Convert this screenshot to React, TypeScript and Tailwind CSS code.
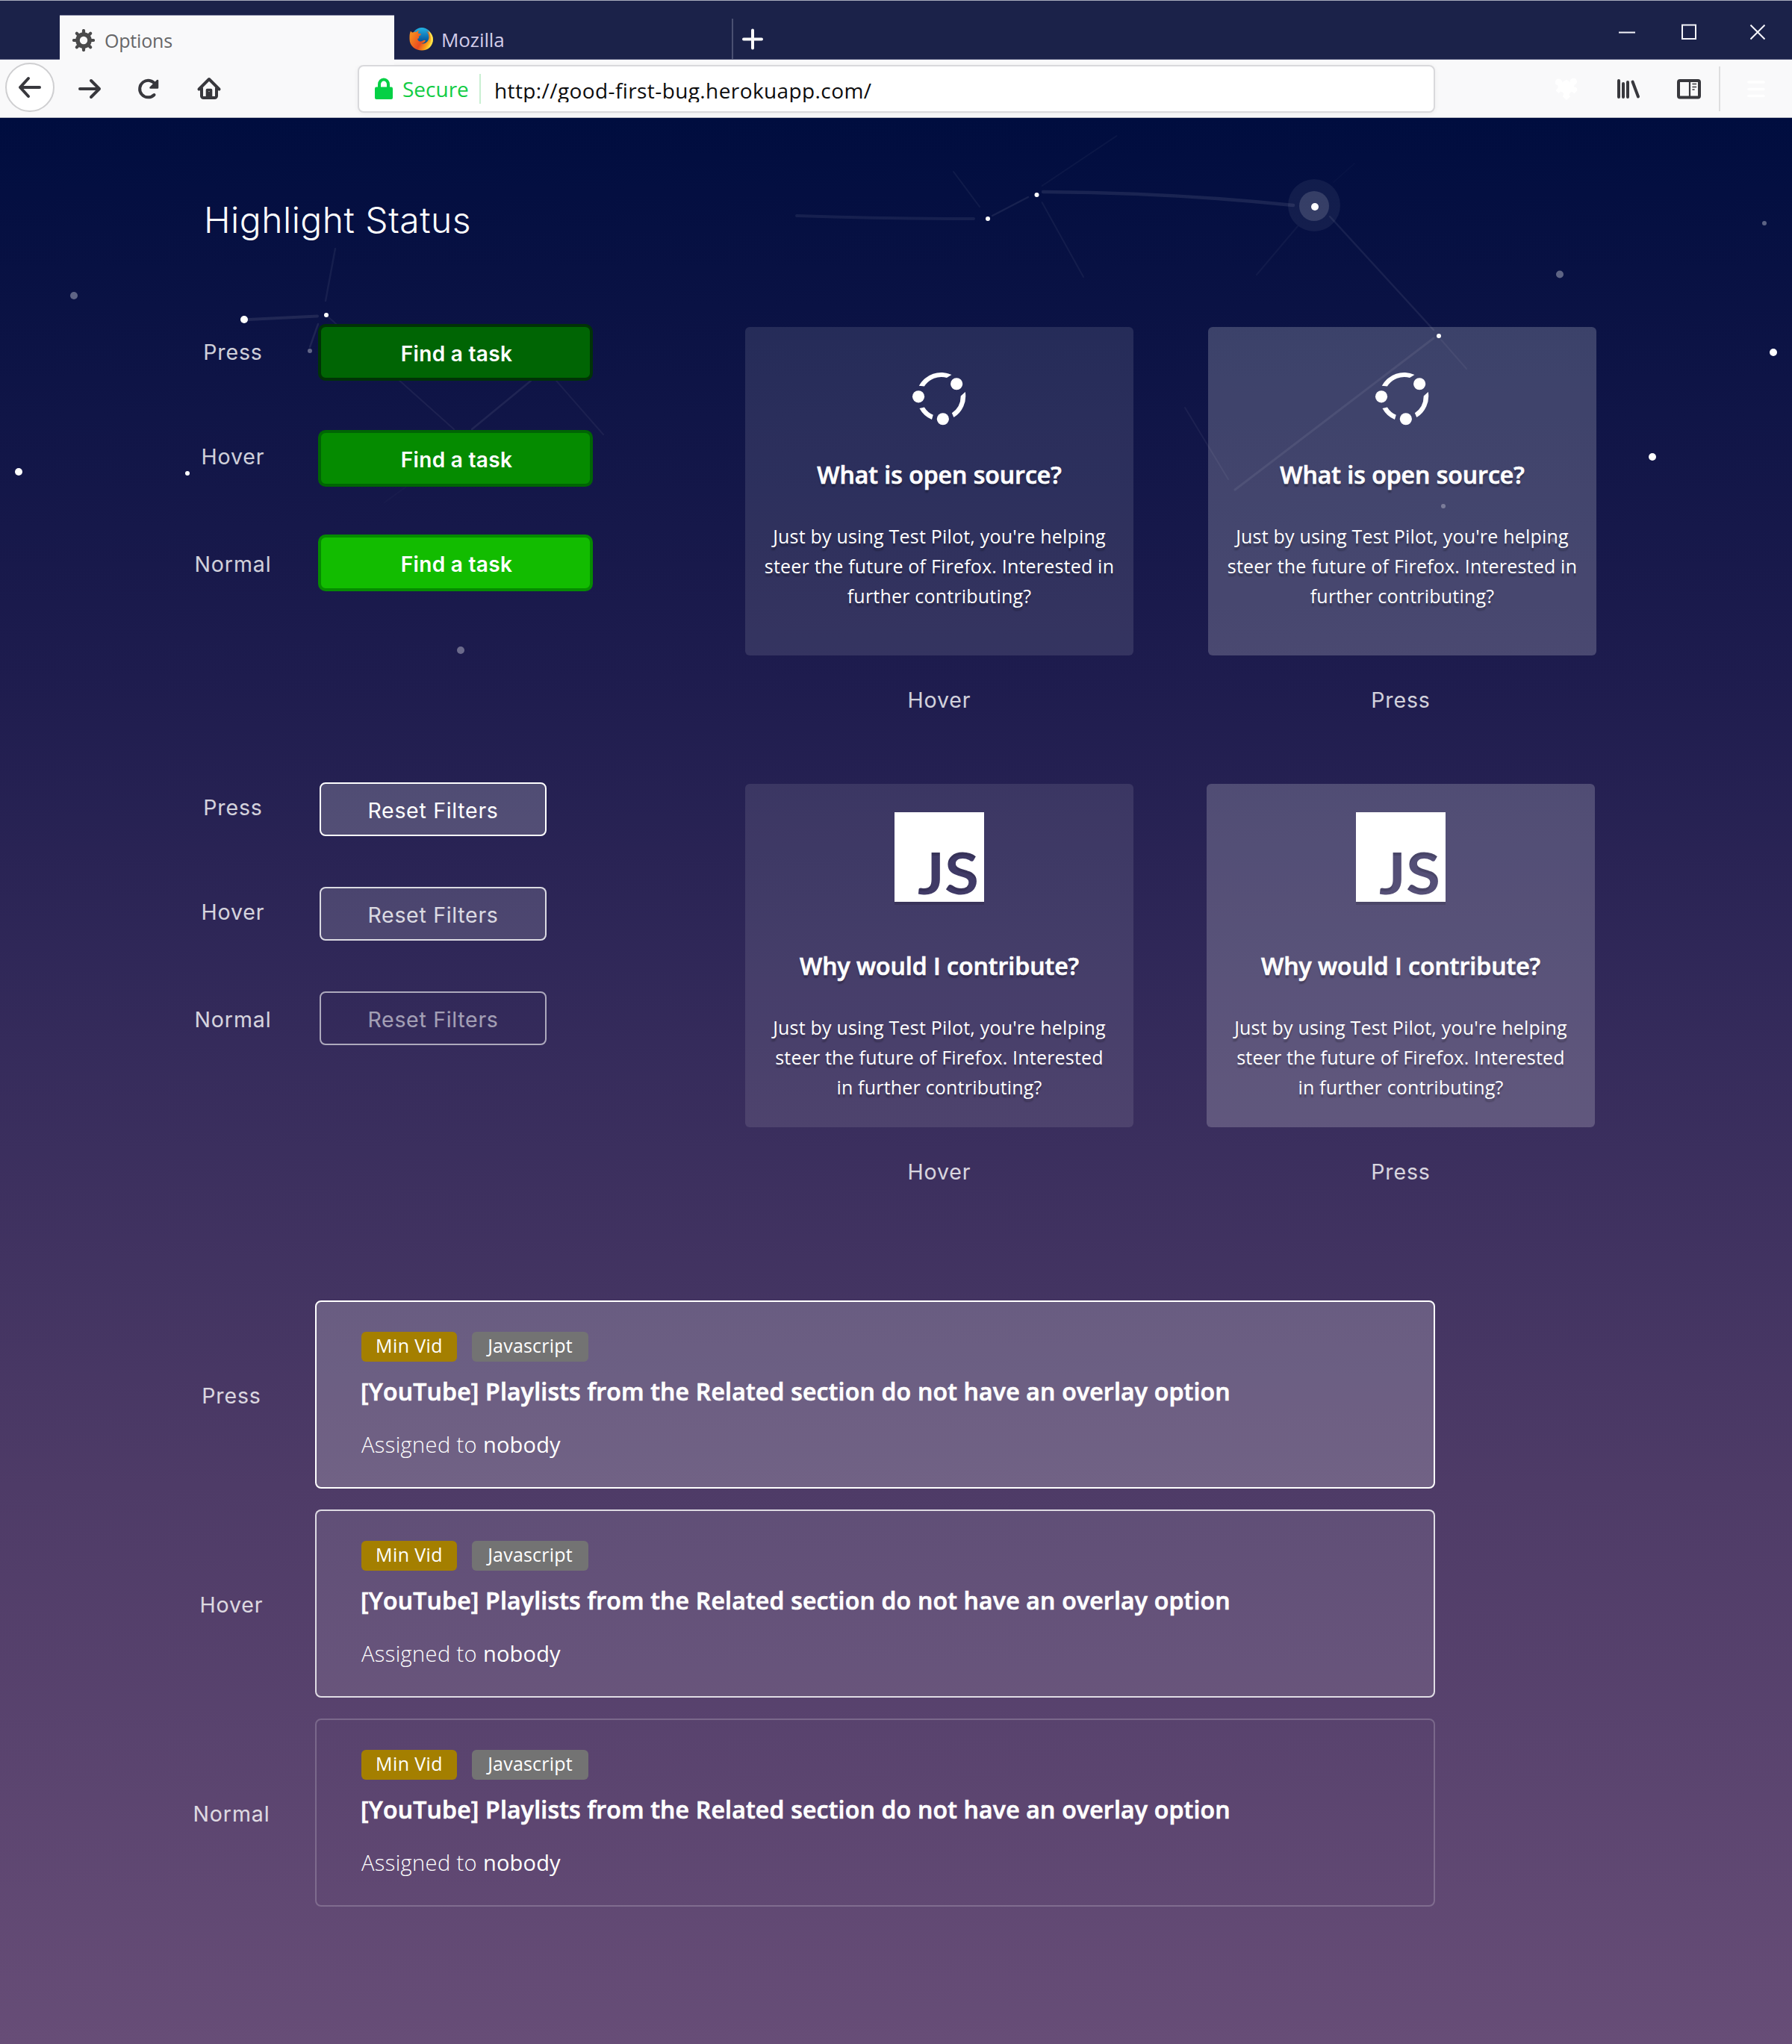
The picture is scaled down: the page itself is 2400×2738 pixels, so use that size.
import type { ReactNode } from "react";

const STARS: { x: number; y: number; r: number; o: number }[] = [
  { x: 1388.5, y: 261, r: 3, o: 1 },
  { x: 1323, y: 293, r: 3, o: 1 },
  { x: 1761, y: 277, r: 5, o: 1 },
  { x: 1927, y: 450, r: 3, o: 1 },
  { x: 2375, y: 472, r: 5, o: 1 },
  { x: 2213, y: 612, r: 5, o: 1 },
  { x: 2089, y: 367.5, r: 5, o: 0.35 },
  { x: 2363, y: 299, r: 3, o: 0.35 },
  { x: 1933, y: 678, r: 3, o: 0.3 },
  { x: 2081, y: 723, r: 3.5, o: 0.2 },
  { x: 99, y: 396, r: 5, o: 0.35 },
  { x: 327, y: 428, r: 5, o: 1 },
  { x: 437, y: 422, r: 3, o: 1 },
  { x: 415, y: 470, r: 3, o: 0.35 },
  { x: 25, y: 632, r: 5, o: 1 },
  { x: 251, y: 634, r: 3, o: 1 },
  { x: 617, y: 871, r: 5, o: 0.35 },
];

const TRAILS: { d: string; w: number; o: number }[] = [
  { d: "M1067 289Q1180 293 1304 293", w: 4, o: 0.07 },
  { d: "M1329 289L1377 264", w: 2.5, o: 0.08 },
  { d: "M1397 257Q1571 258 1732 275", w: 4.5, o: 0.09 },
  { d: "M1277 230L1312 277", w: 2, o: 0.05 },
  { d: "M1395.5 249L1495.5 182", w: 2, o: 0.04 },
  { d: "M1395.5 271L1451 371", w: 2, o: 0.05 },
  { d: "M1738 303L1683 368", w: 2, o: 0.04 },
  { d: "M1814 219L1786 244", w: 2, o: 0.02 },
  { d: "M1781 290L1920 442", w: 2.5, o: 0.07 },
  { d: "M1920 453L1654 656", w: 3, o: 0.07 },
  { d: "M1930 455L1964 494", w: 2, o: 0.05 },
  { d: "M1587 546L1645 642", w: 2, o: 0.05 },
  { d: "M449 333L436 403", w: 2.5, o: 0.06 },
  { d: "M333 428L425 423.5", w: 4, o: 0.09 },
  { d: "M426 434L415 465", w: 2.5, o: 0.08 },
  { d: "M439 424L608 575", w: 2, o: 0.06 },
  { d: "M711 510L632 575", w: 2.5, o: 0.07 },
  { d: "M544 652L515 673", w: 2, o: 0.02 },
  { d: "M745 510L808 582", w: 2, o: 0.05 },
];

function Sky() {
  return (
    <svg className="pointer-events-none absolute inset-0" width="2400" height="2580" viewBox="0 158 2400 2580" fill="none">
      {TRAILS.map((t) => (
        <path key={t.d} d={t.d} stroke="#fff" strokeWidth={t.w} strokeOpacity={t.o} strokeLinecap="round" />
      ))}
      <circle cx="1760" cy="275" r="35" fill="#fff" fillOpacity="0.06" />
      <circle cx="1760" cy="276" r="20" fill="#fff" fillOpacity="0.15" />
      {STARS.map((s) => (
        <circle key={`${s.x}-${s.y}`} cx={s.x} cy={s.y} r={s.r} fill="#fff" fillOpacity={s.o} />
      ))}
    </svg>
  );
}

function GearIcon() {
  return (
    <svg width="30" height="30" viewBox="-15 -15 30 30" fill="none" stroke="#4a4a4b">
      <circle r="8" strokeWidth="5.6" />
      {[0, 45, 90, 135, 180, 225, 270, 315].map((a) => (
        <path key={a} d="M0 -9V-13" strokeWidth="4.2" strokeLinecap="round" transform={`rotate(${a})`} />
      ))}
    </svg>
  );
}

function FirefoxIcon() {
  return (
    <svg width="34" height="32" viewBox="0 0 34 32">
      <defs>
        <linearGradient id="globe" x1="0" y1="0" x2="0" y2="1">
          <stop offset="0" stopColor="#23b4e4" />
          <stop offset="0.6" stopColor="#0a62a6" />
          <stop offset="1" stopColor="#123a78" />
        </linearGradient>
        <linearGradient id="fox" x1="0.1" y1="0.2" x2="0.95" y2="0.6">
          <stop offset="0" stopColor="#f58a1f" />
          <stop offset="0.55" stopColor="#ea4a20" />
          <stop offset="0.85" stopColor="#f9a11b" />
          <stop offset="1" stopColor="#fdd93a" />
        </linearGradient>
      </defs>
      <circle cx="18" cy="14" r="13" fill="url(#globe)" />
      <path
        d="M3 5.5c.6 1 1.5 1.700 2.800 2 1.500-.7 3-.8 4.700-.4 1-1.400 2.400-2.300 4-2.600-1 1.200-1.600 2.400-1.700 3.700 1 .9 2.600.9 4.200 1-.2 1.600-1.500 2.600-3 3.300-.3 1-.2 1.900.3 2.700-2-.4-2.600 1.200-1.500 2.700 2 2 4.700 1.800 6.600.5 1.400-.9 2.900-.7 3.500.3-1.300 2.300-3.600 3.300-6 3.300 6 1.800 10.800-3 10.600-8.500-.1-3.400-1.500-5.800-3.500-7.800 5.500 2.300 9 6 9 11.300 0 8.500-6.600 14.500-15 14.500S1.500 25.500 1.500 16.500C1.500 12.500 1.300 9 3 5.500z"
        fill="url(#fox)"
      />
      <path d="M26 4.500c5.200 3.500 7.500 8.500 6.600 14-.6 3.600-2.600 6.700-5.600 8.800 2.600-4 3.600-7.800 3-12.300-.5-4-1.800-7.500-4-10.500z" fill="#fde04a" />
    </svg>
  );
}

function ToolIcon({ children, className = "" }: { children: ReactNode; className?: string }) {
  return (
    <svg
      className={`shrink-0 ${className}`}
      width="40"
      height="40"
      viewBox="0 0 40 40"
      fill="none"
      stroke="#38383d"
      strokeWidth="4"
      strokeLinecap="round"
      strokeLinejoin="round"
    >
      {children}
    </svg>
  );
}

function BrowserChrome() {
  return (
    <header className="relative z-10 h-[158px] font-['Open_Sans',sans-serif]">
      <div className="flex h-20 items-start border-t border-t-[#a9adbd] border-b border-b-[#575b7d] bg-[#1b2249] pl-20">
        <div className="relative mt-[19px] flex h-[67px] w-[448px] items-center border-t border-[#8487a3] bg-[#f9f9fa] pl-[17px]">
          <GearIcon />
          <span className="ml-[13px] text-[25px] leading-10 tracking-[-0.2px] text-[#666668]">Options</span>
        </div>
        <div className="mt-6 flex h-[54px] w-[454px] items-center border-r-2 border-[#4a5072] pl-[19px]">
          <FirefoxIcon />
          <span className="ml-[10px] pt-0.5 text-[26px] leading-10 tracking-[-0.1px] text-[#d3cde9]">Mozilla</span>
        </div>
        <svg className="mt-9 ml-3" width="30" height="32" viewBox="0 0 30 32" stroke="#f9f9fa" strokeWidth="4" strokeLinecap="round">
          <path d="M2 15.500H26M14 3.500V27.500" />
        </svg>
        <div className="mt-[31px] mr-9 ml-auto flex items-center text-[#f4f4fa]">
          <svg width="22" height="22" viewBox="0 0 22 22" stroke="currentColor" strokeWidth="2">
            <path d="M0 11.500H22" />
          </svg>
          <svg className="ml-[62px]" width="20" height="22" viewBox="0 0 20 22" fill="none" stroke="currentColor" strokeWidth="2">
            <rect x="1" y="1.500" width="18" height="18.500" />
          </svg>
          <svg className="ml-[72px]" width="20" height="22" viewBox="0 0 20 22" stroke="currentColor" strokeWidth="2">
            <path d="M0.500 1.500L19.500 20.500M19.500 1.500L0.500 20.500" />
          </svg>
        </div>
      </div>

      <div className="flex h-[78px] items-center border-b border-[#b9bac4] bg-[#f9f9fa] pl-[7px]">
        <div className="-mt-[3px] flex size-[66px] shrink-0 items-center justify-center rounded-full border-2 border-[#cfcfd1] bg-white">
          <ToolIcon>
            <path d="M33 20H7M18 8L7 20L18 32" />
          </ToolIcon>
        </div>
        <ToolIcon className="ml-[27px]">
          <path d="M7 20H33M22 9L33 20L22 31" />
        </ToolIcon>
        <ToolIcon className="ml-[38px]">
          <path d="M28.500 28A11.300 11.300 0 1 1 30 14" />
          <path d="M33 9V18.500H23.500Z" fill="#38383d" strokeWidth="2.500" />
        </ToolIcon>
        <ToolIcon className="ml-[42px]">
          <path d="M6.500 20.500L20 7L33.500 20.500M10 19V29.500a2.500 2.500 0 0 0 2.500 2.500H27.500a2.500 2.500 0 0 0 2.500 -2.500V19" />
          <path d="M17.500 31V21.500H22.500V31" strokeWidth="3.600" />
          <path d="M20 25V31" strokeWidth="2.500" />
        </ToolIcon>
        <div className="ml-[179px] flex h-16 w-[1443px] items-center rounded-lg border-2 border-[#d9d9dc] bg-white pl-[21px] shadow-[0_1px_6px_rgba(0,0,0,0.06)]">
          <svg width="24" height="30" viewBox="0 0 24 30">
            <rect y="12.500" width="24" height="16.500" rx="2" fill="#05d045" />
            <path d="M6 14V9a6 6.500 0 0 1 12 0V14" fill="none" stroke="#05d045" strokeWidth="4" />
          </svg>
          <span className="ml-[13px] w-[103px] text-[28px] leading-10 text-[#12cc45]">Secure</span>
          <span className="h-10 w-0.5 bg-[#c9efd2]" />
          <span className="mt-3 ml-[18px] h-9 self-start overflow-hidden text-[28px] leading-10 tracking-[0.4px] text-[#0c0c0d]">
            http://good-first-bug.herokuapp.com/
          </span>
        </div>
        <svg className="ml-[156px] shrink-0" width="40" height="40" viewBox="0 0 40 40" fill="#fff">
          <path d="M20 7.500L25 11.500A4.500 4.500 0 1 1 31 14.500L29.500 17.500Q34.500 17 34.500 22L30.500 26.500Q27 22 24.500 25.500T25.500 30L20 35L14.500 30Q18 27 14.500 24.500T10 26.500L5.500 22Q9.500 19 8.500 15.500A4.500 4.500 0 1 1 14 11.500Z" />
        </svg>
        <ToolIcon className="ml-[43px]">
          <path d="M7 9V31M13 13V31M19 11V31M25.500 10.500L33 30.500" />
        </ToolIcon>
        <ToolIcon className="ml-[41px]">
          <rect x="6" y="9" width="28" height="22.500" rx="2" />
          <path d="M21 9V31" strokeWidth="2.200" />
          <path d="M25 13.500H29.500M25 17.500H29.500M25 21H27" strokeWidth="1.600" />
        </ToolIcon>
        <span className="ml-5 h-[60px] w-0.5 bg-[#dededf]" />
        <svg className="ml-7 shrink-0" width="40" height="40" viewBox="0 0 40 40" stroke="#fff" strokeWidth="3.600" strokeLinecap="round">
          <path d="M10 11H30M10 20.500H30M10 29.500H30" />
        </svg>
      </div>
    </header>
  );
}

const LABEL = "text-center text-[28.5px] leading-10 tracking-[0.9px] text-white/80";

function StateRow({ label, labelClass, children }: { label: string; labelClass: string; children: ReactNode }) {
  return (
    <div className="flex items-center">
      <span className={`w-40 ${LABEL} ${labelClass}`}>{label}</span>
      {children}
    </div>
  );
}

function PrimaryButton({ className }: { className: string }) {
  return (
    <button
      className={`ml-[34px] h-[76px] w-[368px] rounded-[10px] border-4 pt-1 pl-[3px] text-[28px] font-semibold tracking-[0.3px] text-white ${className}`}
    >
      Find a task
    </button>
  );
}

function ResetButton({ className }: { className: string }) {
  return (
    <button className={`ml-9 h-[72px] w-[304px] rounded-lg border-2 pt-1 text-[28.5px] tracking-[0.7px] ${className}`}>
      Reset Filters
    </button>
  );
}

function CommunityIcon() {
  return (
    <svg className="mx-auto block" width="76" height="76" viewBox="672 215 212 212" fill="#fff">
      <path d="M702 273A94 94 0 0 1 824 232L806 243A76 76 0 0 0 722 275Z" />
      <path d="M875 296A94 94 0 0 1 832 391L825 375A76 76 0 0 0 858 311Z" />
      <path d="M750 399A94 94 0 0 1 704 357L722 353A76 76 0 0 0 755 382Z" />
      <circle cx="842.500" cy="266" r="22.500" />
      <circle cx="700" cy="313.500" r="22.500" />
      <circle cx="791.500" cy="397" r="22.500" />
    </svg>
  );
}

function JsIcon({ id }: { id: string }) {
  return (
    <svg
      className="mx-auto block overflow-visible drop-shadow-[0_4px_0.5px_rgba(0,0,0,0.12)] [text-shadow:none]"
      width="120"
      height="120"
      viewBox="0 0 120 120"
    >
      <mask id={id}>
        <rect width="120" height="120" fill="#fff" />
        <text
          x="31"
          y="109.500"
          fontFamily="Lato, sans-serif"
          fontSize="77"
          fontWeight="700"
          textLength="82"
          lengthAdjust="spacingAndGlyphs"
          fill="#000"
        >
          JS
        </text>
      </mask>
      <rect width="120" height="120" fill="#fff" mask={`url(#${id})`} />
    </svg>
  );
}

function InfoCard({ icon, title, lines, className }: { icon: ReactNode; title: string; lines: string[]; className: string }) {
  return (
    <article
      className={`w-[520px] rounded-md text-center font-['Open_Sans',sans-serif] text-white [text-shadow:0_4px_2px_rgba(0,0,0,0.25)] ${className}`}
    >
      {icon}
      <h2 className="text-[32px] leading-10 font-semibold [-webkit-text-stroke:0.7px_white]">{title}</h2>
      <p className="mt-[42px] text-[25px] leading-10 tracking-[0.2px]">
        {lines.map((l) => (
          <span key={l} className="block">
            {l}
          </span>
        ))}
      </p>
    </article>
  );
}

const OPEN_SOURCE = ["Just by using Test Pilot, you're helping", "steer the future of Firefox. Interested in", "further contributing?"];
const CONTRIBUTE = ["Just by using Test Pilot, you're helping", "steer the future of Firefox. Interested", "in further contributing?"];

function OpenSourceCard({ className }: { className: string }) {
  return (
    <InfoCard
      className={`h-[440px] pt-[58px] ${className}`}
      icon={
        <div className="mb-11">
          <CommunityIcon />
        </div>
      }
      title="What is open source?"
      lines={OPEN_SOURCE}
    />
  );
}

function ContributeCard({ id, className }: { id: string; className: string }) {
  return (
    <InfoCard
      className={`h-[460px] pt-[38px] ${className}`}
      icon={
        <div className="mb-[66px]">
          <JsIcon id={id} />
        </div>
      }
      title="Why would I contribute?"
      lines={CONTRIBUTE}
    />
  );
}

function CardLabels() {
  return (
    <div className="mt-10 flex gap-[98px]">
      <span className={`w-[520px] ${LABEL}`}>Hover</span>
      <span className={`w-[520px] ${LABEL}`}>Press</span>
    </div>
  );
}

function IssueRow({ label, className }: { label: string; className: string }) {
  return (
    <div className="flex items-center">
      <span className={`mr-[32px] w-40 pt-1 ${LABEL}`}>{label}</span>
      <article className={`h-[252px] w-[1500px] rounded-lg border-2 pt-10 pl-[60px] font-['Open_Sans',sans-serif] text-white ${className}`}>
        <div className="flex gap-5 text-[25px] leading-[37px]">
          <span className="h-10 w-32 rounded-md bg-[#a47f00] text-center tracking-[0.4px]">Min Vid</span>
          <span className="h-10 w-[156px] rounded-md bg-[#737373] text-center tracking-[0.2px]">Javascript</span>
        </div>
        <h2 className="mt-[18px] -ml-px text-[32px] leading-[44px] font-semibold tracking-[0.21px] [-webkit-text-stroke:0.7px_white]">
          [YouTube] Playlists from the Related section do not have an overlay option
        </h2>
        <p className="mt-[29px] text-[29px] leading-10 font-light tracking-[0.4px]">
          Assigned to <span className="font-normal tracking-[0.2px]">nobody</span>
        </p>
      </article>
    </div>
  );
}

export default function App() {
  return (
    <div className="w-[2400px] bg-[#000d3f] font-['Inter',sans-serif]">
      <BrowserChrome />
      <main className="relative h-[2580px] bg-[linear-gradient(180deg,#000d3f_0%,#1e1c4e_29%,#352b5b_48%,#4e3b67_71%,#674d77_100%)]">
        <Sky />
        <section className="relative pt-[107px]">
          <h1 className="ml-[273px] text-[48px] leading-[60px] font-light tracking-[0.5px] text-white">Highlight Status</h1>

          <div className="mt-[109px] flex">
            <div className="ml-[232px] w-[766px]">
              <div className="flex flex-col gap-16">
                <StateRow label="Press" labelClass="mb-0.5">
                  <PrimaryButton className="mb-0.5 border-[#003306] bg-[#006504]" />
                </StateRow>
                <StateRow label="Hover" labelClass="mb-1">
                  <PrimaryButton className="border-[#006504] bg-[#058b00]" />
                </StateRow>
                <StateRow label="Normal" labelClass="mt-1">
                  <PrimaryButton className="border-[#058b00] bg-[#12bc00]" />
                </StateRow>
              </div>

              <div className="mt-64 flex flex-col gap-[68px]">
                <StateRow label="Press" labelClass="mb-1">
                  <ResetButton className="border-white bg-white/20 text-white" />
                </StateRow>
                <StateRow label="Hover" labelClass="mb-1">
                  <ResetButton className="border-white/80 bg-white/15 text-white/80" />
                </StateRow>
                <StateRow label="Normal" labelClass="mt-1">
                  <ResetButton className="border-white/60 text-white/55" />
                </StateRow>
              </div>
            </div>

            <div className="pt-1">
              <div className="flex gap-[100px]">
                <OpenSourceCard className="bg-white/11" />
                <OpenSourceCard className="bg-white/20" />
              </div>
              <CardLabels />
              <div className="mt-[92px] flex gap-[98px]">
                <ContributeCard id="js-hover" className="bg-white/10" />
                <ContributeCard id="js-press" className="bg-white/20" />
              </div>
              <CardLabels />
            </div>
          </div>
        </section>

        <section className="relative mt-[152px] ml-[230px] flex flex-col gap-7">
          <IssueRow label="Press" className="border-white bg-white/20" />
          <IssueRow label="Hover" className="border-white/80 bg-white/10" />
          <IssueRow label="Normal" className="border-white/20" />
        </section>
      </main>
    </div>
  );
}
